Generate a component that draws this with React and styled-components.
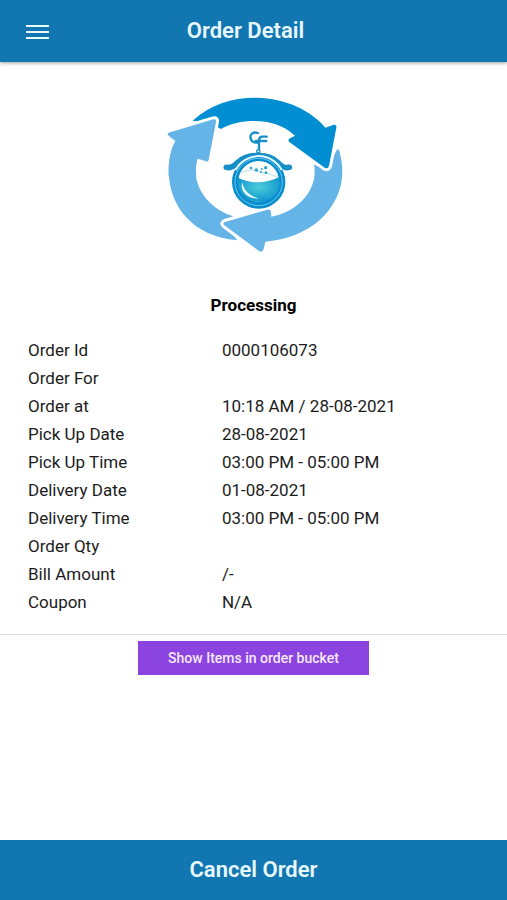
import React from "react";
import styled, { createGlobalStyle } from "styled-components";

const GlobalStyle = createGlobalStyle`
  * { box-sizing: border-box; }
  body { margin: 0; background: #fff; }
  button { font-family: inherit; border: 0; cursor: pointer; }
`;

const Page = styled.div`
  min-height: 100vh;
  display: flex;
  flex-direction: column;
  font-family: Roboto, "Liberation Sans", sans-serif;
  color: #1c1c1c;
`;

const TopBar = styled.header`
  display: grid;
  grid-template-columns: 48px 1fr 64px;
  align-items: center;
  height: 62px;
  padding: 0 13px;
  background: #1276b0;
  box-shadow: 0 1px 4px rgba(0, 0, 0, 0.4);
`;

const MenuButton = styled.button`
  display: flex;
  align-items: center;
  justify-content: center;
  height: 48px;
  padding: 0;
  background: transparent;
  color: #e8f8ff;
`;

const Title = styled.h1`
  margin: 0;
  text-align: center;
  font-size: 22px;
  line-height: 28px;
  font-weight: 600;
  color: #e8f8ff;
`;

const Content = styled.main`
  flex: 1;
`;

const Status = styled.section`
  display: flex;
  flex-direction: column;
  align-items: center;
  gap: 34px;
  padding-top: 28px;
`;

const StatusText = styled.h2`
  margin: 0;
  font-size: 17px;
  line-height: 22px;
  font-weight: 700;
  color: #000;
`;

const Details = styled.dl`
  margin: 0;
  padding: 20px 28px 18px;
  border-bottom: 1px solid #dedede;
`;

const DetailRow = styled.div`
  display: grid;
  grid-template-columns: 43% 1fr;
  min-height: 28px;
  font-size: 17px;
  line-height: 28px;
`;

const Label = styled.dt`
  margin: 0;
`;

const Value = styled.dd`
  margin: 0;
`;

const Actions = styled.div`
  display: flex;
  justify-content: center;
  padding: 6px 16px;
`;

const ItemsButton = styled.button`
  height: 34px;
  padding: 0 30px;
  background: #8b44df;
  color: #f8e8ff;
  font-size: 14px;
  line-height: 20px;
  font-weight: 500;
`;

const CancelButton = styled.button`
  width: 100%;
  height: 60px;
  background: #1276b0;
  color: #e8f8ff;
  font-size: 22px;
  line-height: 28px;
  font-weight: 600;
`;

const details = [
  ["Order Id", "0000106073"],
  ["Order For", ""],
  ["Order at", "10:18 AM / 28-08-2021"],
  ["Pick Up Date", "28-08-2021"],
  ["Pick Up Time", "03:00 PM - 05:00 PM"],
  ["Delivery Date", "01-08-2021"],
  ["Delivery Time", "03:00 PM - 05:00 PM"],
  ["Order Qty", ""],
  ["Bill Amount", "/-"],
  ["Coupon", "N/A"],
];

function MenuIcon() {
  return (
    <svg width="24" height="16" viewBox="0 0 24 16" aria-hidden="true">
      <path d="M1 3H24M1 9H24M1 15H24" stroke="currentColor" strokeWidth="2" />
    </svg>
  );
}

function ProcessingLogo() {
  return (
    <svg width="187" height="170" viewBox="0 0 561 510" role="img" aria-label="Laundry order in progress">
      <defs>
        <radialGradient id="water" cx="50%" cy="40%" r="65%">
          <stop offset="0" stopColor="#4ccbd9" />
          <stop offset="1" stopColor="#0b91cf" />
        </radialGradient>
      </defs>
      <g strokeLinejoin="round">
        <path
          fill="#64b4e7"
          d="M26 128L160 88Q170 86 168 96L146 210Q143 218 136 213L113 206C91 270 130 350 220 379L190 398L232 451C100 440 26 350 26 240Q27 188 46 153L26 137Q20 131 26 128Z"
        />
        <path
          fill="#64b4e7"
          stroke="#fff"
          strokeWidth="18"
          paintOrder="stroke"
          d="M462 224Q500 240 512 218L530 181Q535 174 538 184C554 240 549 295 517 345C477 410 400 448 316 455L311 477Q307 489 297 483L193 406Q186 400 195 396L322 359Q332 357 333 366L334 380C405 369 477 305 462 224Z"
        />
        <path
          fill="#028ed2"
          stroke="#fff"
          strokeWidth="18"
          paintOrder="stroke"
          d="M98 92C150 43 220 22 290 23C375 24 455 62 496 113L521 104Q531 103 529 113L507 228Q504 238 494 233L389 157Q381 150 390 145L405 137C370 105 325 93 285 93C245 93 211 101 183 117L150 100Z"
        />
        <path
          fill="#64b4e7"
          stroke="#fff"
          strokeWidth="18"
          d="M26 128L160 88Q170 86 168 96L146 210Q143 218 136 213L113 206L46 153L26 137Q20 131 26 128Z"
        />
        <path
          fill="#64b4e7"
          d="M26 128L160 88Q170 86 168 96L146 210Q143 218 136 213L113 206Q105 227 109 258L26 258Q23 195 46 153L26 137Q20 131 26 128Z"
        />
      </g>
      <g fill="none" stroke="#168fc7" strokeLinecap="round">
        <path strokeWidth="7" d="M294 129C278 124 269 134 272 145C274 157 288 161 298 155M320 140H307Q297 140 297 151V178M287 153H319" />
        <circle cx="295" cy="184" r="5" strokeWidth="4" />
        <path strokeWidth="17" d="M199 232Q216 236 231 219Q254 196 293 197Q332 196 355 219Q370 236 388 232" />
      </g>
      <circle cx="296" cy="276" r="80" fill="#078dcb" />
      <circle cx="296" cy="276" r="71" fill="none" stroke="#66c7ed" strokeWidth="3" />
      <path d="M227 240A78 78 0 0 1 365 240" fill="none" stroke="#e3f8ff" strokeWidth="6" />
      <circle cx="296" cy="274" r="61" fill="#fff" />
      <path fill="url(#water)" d="M234 263Q267 278 297 277Q328 276 358 261Q365 302 336 323Q297 348 258 323Q229 301 234 263Z" />
      <path fill="none" stroke="#b1dfed" strokeWidth="3" d="M242 248Q270 234 300 245Q337 253 354 262" />
      <path fill="#eaffff" d="M247 276C238 304 263 327 296 326C270 317 250 302 247 276Z" />
      <g fill="#22a4cf">
        <circle cx="273" cy="234" r="4" /><circle cx="289" cy="240" r="5" />
        <circle cx="305" cy="237" r="3" /><circle cx="317" cy="233" r="5" />
        <circle cx="303" cy="246" r="3" /><circle cx="318" cy="248" r="4" />
      </g>
    </svg>
  );
}

export default function App() {
  return (
    <Page>
      <GlobalStyle />
      <TopBar>
        <MenuButton type="button" aria-label="Open menu"><MenuIcon /></MenuButton>
        <Title>Order Detail</Title>
      </TopBar>
      <Content>
        <Status>
          <ProcessingLogo />
          <StatusText>Processing</StatusText>
        </Status>
        <Details>
          {details.map(([label, value]) => (
            <DetailRow key={label}>
              <Label>{label}</Label>
              <Value>{value}</Value>
            </DetailRow>
          ))}
        </Details>
        <Actions>
          <ItemsButton type="button">Show Items in order bucket</ItemsButton>
        </Actions>
      </Content>
      <CancelButton type="button">Cancel Order</CancelButton>
    </Page>
  );
}
